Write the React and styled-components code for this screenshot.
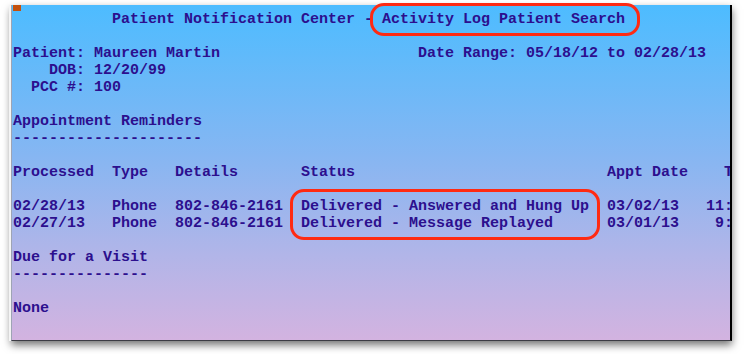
import styled, { createGlobalStyle } from "styled-components";

const GlobalStyle = createGlobalStyle`
  body {
    margin: 0;
    background: #ffffff;
  }
`;

const Page = styled.div`
  position: relative;
  width: 744px;
  height: 354px;
  padding: 5px 0 0 11px;
  box-sizing: border-box;
  overflow: hidden;
`;

const Screen = styled.div`
  position: relative;
  width: 721px;
  height: 336px;
  overflow: hidden;
  border-left: 1px solid #9ea4b4;
  border-right: 2px solid #000000;
  border-bottom: 1px solid #3c3c44;
  box-shadow: -2px 0 0 #f4f4f4, 0 4px 8px rgba(0, 0, 0, 0.55);
  background: linear-gradient(180deg, #4dbcff 0%, #86b6f2 45%, #b2b5e8 75%, #d3b3e0 100%);
  padding: 6px 0 0 1px;
  box-sizing: border-box;
  font-family: "Liberation Mono", "Courier New", monospace;
  font-weight: bold;
  font-size: 15px;
  color: #2c0f8e;
`;

const Cursor = styled.div`
  position: absolute;
  left: 1px;
  top: 0;
  width: 8px;
  height: 6px;
  background: #c4500c;
`;

const Line = styled.div`
  height: 17px;
  line-height: 17px;
  white-space: pre;
  padding-left: ${(p) => p.$indent || 0}ch;
`;

const FieldRow = styled.div`
  display: grid;
  grid-template-columns: 8ch 37ch auto;
  height: 17px;
  line-height: 17px;
  white-space: pre;
`;

const FieldLabel = styled.span`
  text-align: right;
`;

const FieldValue = styled.span`
  padding-left: 1ch;
`;

const TableRow = styled.div`
  display: grid;
  grid-template-columns: 11ch 7ch 14ch 34ch ${(p) => p.$apptWidth}ch auto;
  height: 17px;
  line-height: 17px;
  white-space: pre;
`;

const Callout = styled.div`
  position: absolute;
  left: ${(p) => p.$x}px;
  top: ${(p) => p.$y}px;
  width: ${(p) => p.$w}px;
  height: ${(p) => p.$h}px;
  border: 3px solid #ff2a12;
  border-radius: 14px;
  box-sizing: border-box;
`;

const reminders = [
  { processed: "02/28/13", type: "Phone", details: "802-846-2161", status: "Delivered - Answered and Hung Up", appt: "03/02/13", time: "11:" },
  { processed: "02/27/13", type: "Phone", details: "802-846-2161", status: "Delivered - Message Replayed", appt: "03/01/13", time: " 9:" },
];

const App = () => {
  return (
    <Page>
      <GlobalStyle />
      <Screen>
        <Cursor />
        <Line $indent={11}>Patient Notification Center - Activity Log Patient Search</Line>
        <Line />
        <FieldRow>
          <FieldLabel>Patient:</FieldLabel>
          <FieldValue>Maureen Martin</FieldValue>
          <span>Date Range: 05/18/12 to 02/28/13</span>
        </FieldRow>
        <FieldRow>
          <FieldLabel>DOB:</FieldLabel>
          <FieldValue>12/20/99</FieldValue>
        </FieldRow>
        <FieldRow>
          <FieldLabel>PCC #:</FieldLabel>
          <FieldValue>100</FieldValue>
        </FieldRow>
        <Line />
        <Line>Appointment Reminders</Line>
        <Line>---------------------</Line>
        <Line />
        <TableRow $apptWidth={13}>
          <span>Processed</span>
          <span>Type</span>
          <span>Details</span>
          <span>Status</span>
          <span>Appt Date</span>
          <span>T</span>
        </TableRow>
        <Line />
        {reminders.map((r) => (
          <TableRow key={r.processed} $apptWidth={11}>
            <span>{r.processed}</span>
            <span>{r.type}</span>
            <span>{r.details}</span>
            <span>{r.status}</span>
            <span>{r.appt}</span>
            <span>{r.time}</span>
          </TableRow>
        ))}
        <Line />
        <Line>Due for a Visit</Line>
        <Line>---------------</Line>
        <Line />
        <Line>None</Line>
      </Screen>
      <Callout $x={370} $y={3} $w={270} $h={33} />
      <Callout $x={290} $y={189} $w={310} $h={51} />
    </Page>
  );
};

export default App;
